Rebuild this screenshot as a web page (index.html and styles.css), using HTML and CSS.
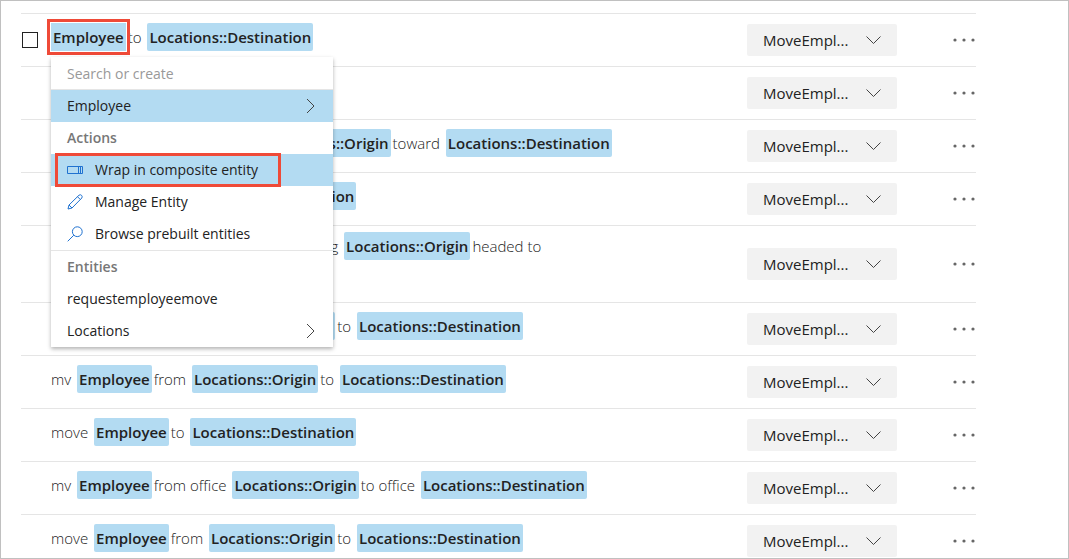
FILE: index.html
```html
<!DOCTYPE html>
<html lang="en">
<head>
<meta charset="utf-8">
<title>Utterances</title>
<link rel="stylesheet" href="styles.css">
</head>
<body>
<svg class="defs" aria-hidden="true">
  <symbol id="down" viewBox="0 0 15 8"><path d="M.5 .5l7 7 7-7"/></symbol>
  <symbol id="right" viewBox="0 0 9 16"><path d="M1 1l7 7-7 7"/></symbol>
  <symbol id="dots" viewBox="0 0 23 4"><circle cx="2" cy="2" r="1.6"/><circle cx="11" cy="2" r="1.6"/><circle cx="20" cy="2" r="1.6"/></symbol>
</svg>
<main class="list">
  <div class="row">
    <input class="tick" type="checkbox" aria-label="Select utterance">
    <div class="text"><div class="anchor"><button class="chip">Employee</button>
      <div class="menu">
        <input class="search" type="text" placeholder="Search or create" aria-label="Search or create">
        <button class="item active">Employee<svg class="next"><use href="#right"/></svg></button>
        <div class="heading">Actions</div>
        <button class="item active marked"><svg class="icon" viewBox="0 0 16 16"><path d="M.5 4.500h15v7H.5zM11.500 4.500v7M13.500 4.500v7"/></svg>Wrap in composite entity</button>
        <button class="item"><svg class="icon" viewBox="0 0 16 16"><path d="M1 15l1-4L12 1.200q1.500-1 2.600.200t.200 2.600L5 14zM2 11l3 3M10.500 2.700l2.800 2.800"/></svg>Manage Entity</button>
        <button class="item"><svg class="icon" viewBox="0 0 16 16"><circle cx="10.300" cy="5.700" r="4.900"/><path d="M6.800 9.200L.7 15.300"/></svg>Browse prebuilt entities</button>
        <div class="heading divided">Entities</div>
        <button class="item">requestemployeemove</button>
        <button class="item">Locations<svg class="next"><use href="#right"/></svg></button>
      </div></div>to <span class="chip">Locations::Destination</span></div>
    <div class="pick"><select aria-label="Intent"><option>MoveEmpl...</option></select><svg class="down"><use href="#down"/></svg></div>
    <button class="more" aria-label="More"><svg><use href="#dots"/></svg></button>
  </div>
  <div class="row">
    <div class="text"></div>
    <div class="pick"><select aria-label="Intent"><option>MoveEmpl...</option></select><svg class="down"><use href="#down"/></svg></div>
    <button class="more" aria-label="More"><svg><use href="#dots"/></svg></button>
  </div>
  <div class="row">
    <div class="text">displace <span class="chip">Employee</span>away from <span class="chip">Locations::Origin</span>toward <span class="chip">Locations::Destination</span></div>
    <div class="pick"><select aria-label="Intent"><option>MoveEmpl...</option></select><svg class="down"><use href="#down"/></svg></div>
    <button class="more" aria-label="More"><svg><use href="#dots"/></svg></button>
  </div>
  <div class="row">
    <div class="text">move <span class="chip">Employee</span>to <span class="chip">Locations::Destination</span></div>
    <div class="pick"><select aria-label="Intent"><option>MoveEmpl...</option></select><svg class="down"><use href="#down"/></svg></div>
    <button class="more" aria-label="More"><svg><use href="#dots"/></svg></button>
  </div>
  <div class="row tall">
    <div class="text">begin paperwork to put <span class="chip">Employee</span>leaving <span class="chip">Locations::Origin</span>headed to</div>
    <div class="pick"><select aria-label="Intent"><option>MoveEmpl...</option></select><svg class="down"><use href="#down"/></svg></div>
    <button class="more" aria-label="More"><svg><use href="#dots"/></svg></button>
  </div>
  <div class="row">
    <div class="text">move <span class="chip">Employee</span>from <span class="chip">Locations::Origin</span>to <span class="chip">Locations::Destination</span></div>
    <div class="pick"><select aria-label="Intent"><option>MoveEmpl...</option></select><svg class="down"><use href="#down"/></svg></div>
    <button class="more" aria-label="More"><svg><use href="#dots"/></svg></button>
  </div>
  <div class="row">
    <div class="text">mv <span class="chip">Employee</span>from <span class="chip">Locations::Origin</span>to <span class="chip">Locations::Destination</span></div>
    <div class="pick"><select aria-label="Intent"><option>MoveEmpl...</option></select><svg class="down"><use href="#down"/></svg></div>
    <button class="more" aria-label="More"><svg><use href="#dots"/></svg></button>
  </div>
  <div class="row">
    <div class="text">move <span class="chip">Employee</span>to <span class="chip">Locations::Destination</span></div>
    <div class="pick"><select aria-label="Intent"><option>MoveEmpl...</option></select><svg class="down"><use href="#down"/></svg></div>
    <button class="more" aria-label="More"><svg><use href="#dots"/></svg></button>
  </div>
  <div class="row">
    <div class="text">mv <span class="chip">Employee</span>from office <span class="chip">Locations::Origin</span>to office <span class="chip">Locations::Destination</span></div>
    <div class="pick"><select aria-label="Intent"><option>MoveEmpl...</option></select><svg class="down"><use href="#down"/></svg></div>
    <button class="more" aria-label="More"><svg><use href="#dots"/></svg></button>
  </div>
  <div class="row">
    <div class="text">move <span class="chip">Employee</span>from <span class="chip">Locations::Origin</span>to <span class="chip">Locations::Destination</span></div>
    <div class="pick"><select aria-label="Intent"><option>MoveEmpl...</option></select><svg class="down"><use href="#down"/></svg></div>
    <button class="more" aria-label="More"><svg><use href="#dots"/></svg></button>
  </div>
</main>
</body>
</html>
```
FILE: styles.css
```css
* { box-sizing: border-box; }
body {
  margin: 0;
  height: 100vh;
  overflow: hidden;
  border: 1px solid #c0c0c0;
  background: #fff;
  color: #222;
  font: 15px/24px "Open Sans", "Noto Sans", sans-serif;
}
button, input, select {
  font: inherit;
  color: inherit;
  border: 0;
  margin: 0;
  padding: 0;
  background: none;
}
svg { fill: none; stroke: #444; }
.defs { position: absolute; width: 0; height: 0; }
.list { padding: 12px 92px 0 20px; }
.row {
  display: grid;
  grid-template-columns: 30px 1fr 150px 79px;
  align-items: center;
  min-height: 53px;
  border-top: 1px solid #e5e5e5;
}
.tick {
  appearance: none;
  width: 16px;
  height: 16px;
  margin-left: 1px;
  border: 1px solid #222;
}
.text {
  grid-column: 2;
  padding-bottom: 6px;
  font-weight: 300;
  white-space: nowrap;
}
.tall { min-height: 77px; }
.tall .text { padding-bottom: 36px; }
.chip {
  display: inline-block;
  height: 28px;
  margin: -2px 2px;
  padding: 0 2px;
  border-radius: 2px;
  background: #b3dbf2;
  font-weight: 600;
  line-height: 28px;
}
.anchor { display: inline-block; position: relative; }
.anchor > .chip { margin-left: 0; outline: 3px solid #ef4a38; outline-offset: 1px; border-radius: 0; }
.pick { grid-column: 3; display: grid; align-items: center; }
.pick > * { grid-area: 1 / 1; }
.pick select {
  appearance: none;
  width: 100%;
  height: 32px;
  padding-left: 16px;
  border-radius: 2px;
  background: #f2f2f2;
}
.down {
  justify-self: end;
  width: 15px;
  height: 8px;
  margin-right: 16px;
  pointer-events: none;
}
.more { justify-self: end; display: flex; }
.more svg { width: 23px; height: 4px; fill: #666; stroke: none; }
.menu {
  position: absolute;
  z-index: 1;
  top: 32px;
  left: 0;
  width: 282px;
  background: #fff;
  box-shadow: 0 2px 4px rgba(0, 0, 0, .3);
  font-size: 14px;
  font-weight: 400;
}
.search, .item, .heading {
  display: flex;
  align-items: center;
  width: 100%;
  height: 32px;
  padding: 0 16px;
}
.search { height: 33px; border-bottom: 1px solid #e5e5e5; }
.search::placeholder { color: #999; opacity: 1; }
.heading { color: #777; font-weight: 600; }
.divided { height: 33px; border-top: 1px solid #e5e5e5; }
.active { background: #b3dbf2; }
.marked { position: relative; }
.marked::after {
  content: "";
  position: absolute;
  inset: -1px 52px -1px 4px;
  border: 3px solid #ef4a38;
}
.icon { width: 16px; height: 16px; margin-right: 12px; stroke: #2072d0; }
.next { width: 9px; height: 16px; margin-left: auto; margin-right: 2px; }
```
